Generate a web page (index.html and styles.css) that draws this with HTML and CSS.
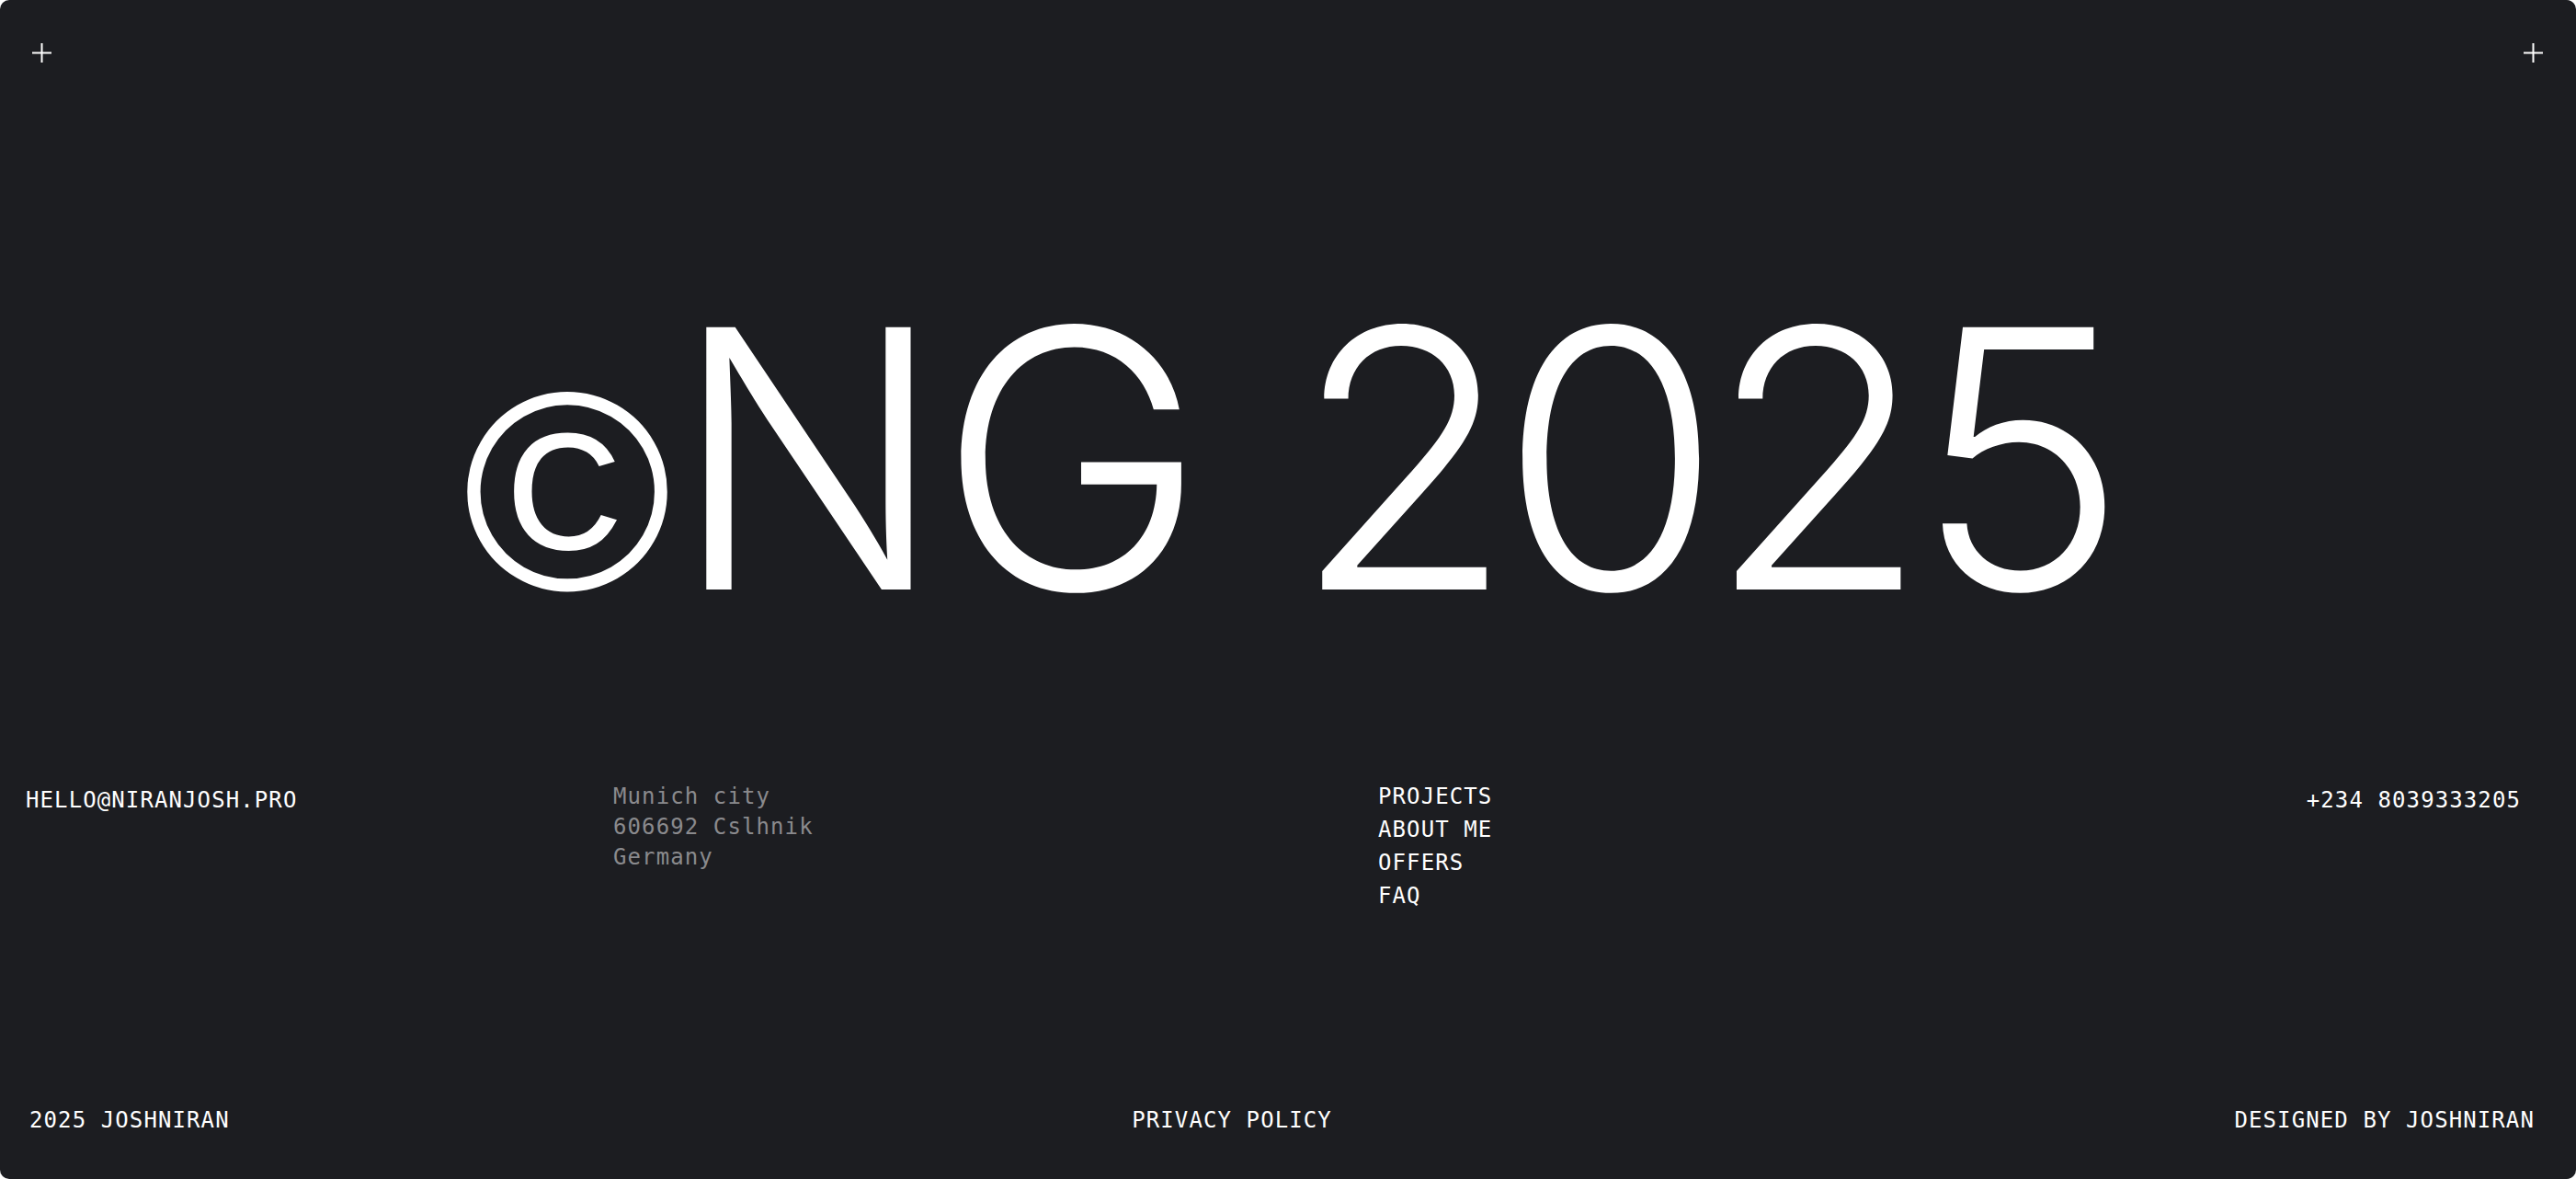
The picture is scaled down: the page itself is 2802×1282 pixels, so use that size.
FILE: index.html
```html
<!DOCTYPE html>
<html lang="en">
<head>
<meta charset="utf-8">
<title>Footer</title>
<link rel="stylesheet" href="styles.css">
</head>
<body>
<div class="page">
  <div class="topbar">
    <svg class="plus" viewBox="0 0 21 21" width="21" height="21"><path d="M10.5 0V21M0 10.5H21" stroke="#fff" stroke-width="2"/></svg>
    <svg class="plus" viewBox="0 0 21 21" width="21" height="21"><path d="M10.5 0V21M0 10.5H21" stroke="#fff" stroke-width="2"/></svg>
  </div>
  <div class="hero"><span class="copy">©</span>NG <span class="year">2025</span></div>
  <div class="info">
    <div class="email">HELLO@NIRANJOSH.PRO</div>
    <div class="address">Munich city<br>606692 Cslhnik<br>Germany</div>
    <nav class="nav">
      <a>PROJECTS</a>
      <a>ABOUT ME</a>
      <a>OFFERS</a>
      <a>FAQ</a>
    </nav>
    <div class="phone">+234 8039333205</div>
  </div>
  <div class="bottom">
    <span>2025 JOSHNIRAN</span>
    <span>PRIVACY POLICY</span>
    <span>DESIGNED BY JOSHNIRAN</span>
  </div>
</div>
</body>
</html>
```
FILE: styles.css
```css
html, body {
  margin: 0;
  padding: 0;
  background: #ffffff;
}
.page {
  height: 1282px;
  background: #1c1d21;
  border-radius: 10px;
  display: flex;
  flex-direction: column;
  color: #ffffff;
  font-family: "DejaVu Sans Mono", "Liberation Mono", monospace;
  font-size: 24px;
  letter-spacing: 1.1px;
  overflow: hidden;
}
.topbar {
  display: flex;
  justify-content: space-between;
  padding: 47px 36px 0 35px;
  height: 21px;
}
.plus { display: block; }
.hero {
  margin-top: 235px;
  font-family: "Inter", "Liberation Sans", sans-serif;
  font-weight: 300;
  font-size: 392px;
  line-height: 392px;
  height: 392px;
  letter-spacing: -0.02em;
  text-align: center;
  white-space: nowrap;
}
.copy {
  font-family: "Liberation Sans", "Inter", sans-serif;
  font-weight: 400;
  font-size: 308px;
  letter-spacing: 0;
}
.year {
  letter-spacing: -16px;
}
.info {
  margin-top: 153px;
  display: grid;
  grid-template-columns: 639px 832px 1fr auto;
  align-items: start;
  padding: 0 60px 0 28px;
}
.email { line-height: 36px; margin-top: 4px; }
.address { color: #8a8a8d; line-height: 33px; margin-top: 2px; }
.nav { display: flex; flex-direction: column; line-height: 36px; }
.nav a { color: #ffffff; text-decoration: none; }
.phone { line-height: 36px; margin-top: 4px; text-align: right; }
.bottom {
  margin-top: auto;
  display: flex;
  justify-content: space-between;
  padding: 0 45px 52px 32px;
  line-height: 24px;
}
```
